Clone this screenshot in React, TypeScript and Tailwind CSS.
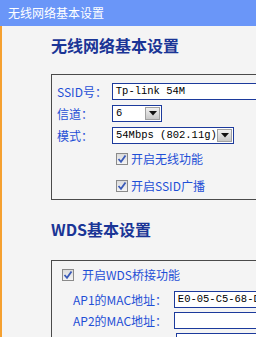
import React from "react";

const cjk = { fontFamily: '"Noto Sans CJK SC", "Noto Sans", sans-serif' };
const mono = { fontFamily: '"Liberation Mono", "Noto Sans CJK SC", monospace' };

function Check() {
  return (
    <span className="inline-flex w-[12px] h-[12px] border border-[#8a8a8a] bg-gradient-to-b from-[#dcdcdc] to-[#f4f4f4] items-center justify-center shrink-0">
      <svg width="10" height="10" viewBox="0 0 10 10">
        <path d="M1.5 5 L4 7.8 L8.5 1.5" stroke="#3a5ab8" strokeWidth="1.8" fill="none" />
      </svg>
    </span>
  );
}

function Arrow() {
  return (
    <span className="flex w-[15px] h-[13px] bg-gradient-to-b from-[#f0f0f0] to-[#c8c8c8] border border-[#a0a0a0] items-center justify-center shrink-0">
      <svg width="8" height="5" viewBox="0 0 8 5">
        <path d="M0 0 H8 L4 4.5 Z" fill="#111" />
      </svg>
    </span>
  );
}

export default function App() {
  return (
    <div className="w-[256px] h-[337px] overflow-hidden bg-[#f4f4f4] flex flex-col" style={cjk}>
      <div className="h-[26px] shrink-0 bg-[#6a96f8] flex items-center pl-[8px] text-white text-[12px] leading-none">
        无线网络基本设置
      </div>
      <div className="flex-1 border-l-2 border-[#f5a030] pl-[49px] flex flex-col">
        <div className="mt-[9px] h-[20px] flex items-center text-[16px] font-bold text-[#1a3596] leading-none whitespace-nowrap">
          无线网络基本设置
        </div>
        <div className="mt-[19px] w-[260px] border border-[#4a4a4a] border-r-0 h-[126px] pt-[8px] pl-[5px] flex flex-col">
          <div className="flex items-center h-[17px]">
            <span className="w-[55px] text-[12px] text-[#1f4fd6] leading-none whitespace-nowrap">SSID号：</span>
            <div className="w-[200px] h-[17px] border border-[#1c3a9c] bg-white flex items-center pl-[3px] text-[10.5px] text-black" style={mono}>
              Tp-link 54M
            </div>
          </div>
          <div className="flex items-center h-[17px] mt-[5px]">
            <span className="w-[55px] text-[12px] text-[#1f4fd6] leading-none whitespace-nowrap">信道：</span>
            <div className="w-[50px] h-[17px] border border-[#1c3a9c] bg-white flex items-center justify-between pl-[3px] pr-[1px] text-[10.5px] text-black" style={mono}>
              <span>6</span>
              <Arrow />
            </div>
          </div>
          <div className="flex items-center h-[17px] mt-[5px]">
            <span className="w-[55px] text-[12px] text-[#1f4fd6] leading-none whitespace-nowrap">模式：</span>
            <div className="w-[122px] h-[17px] border border-[#1c3a9c] bg-white flex items-center justify-between pl-[3px] pr-[1px] text-[10.5px] text-black whitespace-nowrap" style={mono}>
              <span>54Mbps (802.11g)</span>
              <Arrow />
            </div>
          </div>
          <div className="flex items-center h-[14px] mt-[8px] pl-[59px] gap-[3px]">
            <Check />
            <span className="text-[12px] text-[#1f4fd6] leading-none whitespace-nowrap">开启无线功能</span>
          </div>
          <div className="flex items-center h-[14px] mt-[13px] pl-[59px] gap-[3px]">
            <Check />
            <span className="text-[12px] text-[#1f4fd6] leading-none whitespace-nowrap">开启SSID广播</span>
          </div>
        </div>
        <div className="mt-[19px] h-[20px] flex items-center text-[16px] font-bold text-[#1a3596] leading-none whitespace-nowrap">
          WDS基本设置
        </div>
        <div className="mt-[21px] w-[260px] border border-[#4a4a4a] border-r-0 border-b-0 flex-1 pt-[7px] pl-[10px] flex flex-col">
          <div className="flex items-center h-[14px] gap-[8px]">
            <Check />
            <span className="text-[12px] text-[#1f4fd6] leading-none whitespace-nowrap">开启WDS桥接功能</span>
          </div>
          <div className="flex items-center h-[17px] mt-[9px] pl-[11px]">
            <span className="w-[103px] text-[12px] text-[#1f4fd6] leading-none whitespace-nowrap">AP1的MAC地址：</span>
            <div className="w-[140px] h-[17px] border border-[#1c3a9c] bg-white flex items-center pl-[3px] text-[10.5px] text-black whitespace-nowrap overflow-hidden" style={mono}>
              E0-05-C5-68-DE-1A
            </div>
          </div>
          <div className="flex items-center h-[17px] mt-[4px] pl-[11px]">
            <span className="w-[103px] text-[12px] text-[#1f4fd6] leading-none whitespace-nowrap">AP2的MAC地址：</span>
            <div className="w-[140px] h-[17px] border border-[#1c3a9c] bg-white" />
          </div>
          <div className="flex items-center h-[17px] mt-[4px] pl-[114px]">
            <div className="w-[140px] h-[17px] border border-[#1c3a9c] bg-white" />
          </div>
        </div>
      </div>
    </div>
  );
}
